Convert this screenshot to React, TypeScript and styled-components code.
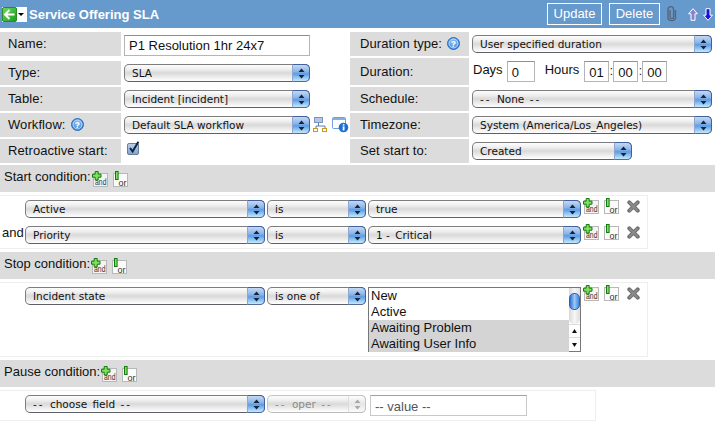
import React from "react";
import styled, { createGlobalStyle } from "styled-components";

const GlobalStyle = createGlobalStyle`
  html, body {
    margin: 0;
    padding: 0;
    background: #fff;
  }
  body {
    width: 715px;
    height: 422px;
    overflow: hidden;
    font-family: "Liberation Sans", Arial, sans-serif;
    font-size: 13px;
    color: #111;
  }
`;

const Header = styled.div`
  display: flex;
  align-items: center;
  height: 28px;
  background: #6699cc;
  padding-left: 2px;
`;

const BackButton = styled.div`
  display: flex;
  width: 25px;
  height: 15px;
  margin-top: 1px;
  background: #fff;
`;

const BackCaret = styled.div`
  width: 0;
  height: 0;
  margin: 6px 0 0 1px;
  border-left: 3px solid transparent;
  border-right: 3px solid transparent;
  border-top: 3px solid #000;
`;

const Title = styled.div`
  margin-left: 2px;
  color: #fff;
  font-weight: bold;
  font-size: 13px;
  flex: 1;
`;

const HeaderButton = styled.div<{ $width: number }>`
  box-sizing: border-box;
  width: ${(p) => p.$width}px;
  height: 22px;
  margin-right: 7px;
  border: 1px solid #fff;
  color: #fff;
  font-size: 13px;
  line-height: 20px;
  text-align: center;
`;

const HeaderIcons = styled.div`
  display: flex;
  align-items: center;
  width: 48px;
`;

const Spacer = styled.span<{ $width: number }>`
  flex: none;
  width: ${(p) => p.$width}px;
`;

const FormColumns = styled.div`
  display: flex;
  margin-top: 4px;
`;

const LeftColumn = styled.div`
  width: 350px;
`;

const RightColumn = styled.div`
  flex: 1;
`;

const Row = styled.div<{ $height?: number; $gap?: number }>`
  display: flex;
  height: ${(p) => p.$height ?? 24}px;
  margin-top: ${(p) => p.$gap ?? 2}px;
`;

const Label = styled.div<{ $width: number; $inset: number }>`
  display: flex;
  align-items: center;
  gap: 5px;
  box-sizing: border-box;
  width: ${(p) => p.$width}px;
  padding: 0 0 1px ${(p) => p.$inset}px;
  background: #dcdcdc;
  font-size: 13px;
  letter-spacing: 0.08px;
`;

const Control = styled.div`
  display: flex;
  align-items: center;
  flex: 1;
  padding-left: 3px;
`;

const TopControl = styled(Control)`
  align-items: flex-start;
`;

const NameInput = styled.div`
  box-sizing: border-box;
  width: 186px;
  height: 21px;
  margin-top: 3px;
  padding-left: 4px;
  border: 1px solid #b5b5b5;
  border-top-color: #8e8e8e;
  font-size: 13px;
  line-height: 20px;
`;

const SelectBox = styled.div<{ $width: number; $disabled?: boolean }>`
  display: flex;
  flex: none;
  box-sizing: border-box;
  width: ${(p) => p.$width}px;
  height: 18px;
  border: 1px solid ${(p) => (p.$disabled ? "#c4c4c4" : "#7d7d7d")};
  border-bottom-color: ${(p) => (p.$disabled ? "#bbb" : "#5f5f6a")};
  border-radius: 5px;
  background: linear-gradient(#fdfdfd 0%, #f0f0f0 25%, #d9d9d9 50%, #ececec 75%, #fff 100%);
  color: ${(p) => (p.$disabled ? "#8a8a8a" : "#111")};
`;

const SelectText = styled.div`
  flex: 1;
  padding-left: 7px;
  font-family: "DejaVu Sans", sans-serif;
  font-size: 10.5px;
  line-height: 16px;
  white-space: nowrap;
`;

const Dashes = styled.span`
  letter-spacing: 2px;
`;

const SpacedWords = styled.span`
  word-spacing: 2px;
`;

const SelectCap = styled.div<{ $disabled?: boolean }>`
  display: flex;
  align-items: center;
  justify-content: center;
  box-sizing: border-box;
  width: 18px;
  margin: -1px -1px -1px 0;
  border: 1px solid ${(p) => (p.$disabled ? "#c4c4c4" : "#41609f")};
  border-left-color: ${(p) => (p.$disabled ? "#ddd" : "#8fa6d0")};
  border-bottom-color: ${(p) => (p.$disabled ? "#bbb" : "#566a98")};
  border-radius: 0 5px 5px 0;
  background: ${(p) =>
    p.$disabled
      ? "linear-gradient(#fdfdfd, #e6e6e6 50%, #fafafa)"
      : "linear-gradient(#c4d8f2 0%, #8db6e8 40%, #5d9ce4 55%, #9fd0f6 85%, #c6e8fb 100%)"};
`;

const CheckBox = styled.div`
  align-self: flex-start;
  margin: 2px 0 0 6px;
`;

const DurationField = styled.div`
  display: flex;
  align-items: flex-start;
  flex: 1;
  padding: 3px 0 0 4px;
`;

const DurationWord = styled.span<{ $left?: number; $right: number }>`
  margin-left: ${(p) => p.$left ?? 0}px;
  margin-right: ${(p) => p.$right}px;
  font-size: 13px;
  line-height: 18px;
`;

const SmallInput = styled.div<{ $width: number }>`
  box-sizing: border-box;
  width: ${(p) => p.$width}px;
  height: 21px;
  padding-left: 4px;
  border: 1px solid #b5b5b5;
  border-top-color: #909090;
  font-size: 13px;
  line-height: 22px;
`;

const Colon = styled.span`
  width: 4px;
  text-align: center;
  font-size: 12px;
  line-height: 20px;
`;

const SectionBar = styled.div`
  display: flex;
  align-items: flex-start;
  height: 23px;
  margin-top: 3px;
  padding: 4px 0 0 4px;
  background: #dcdcdc;
  font-size: 13px;
  line-height: 15px;
`;

const FirstSectionBar = styled(SectionBar)`
  margin-top: 2px;
`;

const BarIcons = styled.div`
  display: flex;
  gap: 5px;
  margin-left: 1px;
  margin-top: 2px;
`;

const FilterBox = styled.div<{ $width: number; $height: number }>`
  box-sizing: border-box;
  width: ${(p) => p.$width}px;
  height: ${(p) => p.$height}px;
  margin-top: 3px;
  padding-top: 4px;
  border: 1px solid #eeeeee;
  border-left: none;
`;

const FilterRow = styled.div`
  display: flex;
  align-items: flex-start;
  gap: 2px;
  margin-bottom: 8px;
`;

const Conjunction = styled.span`
  flex: none;
  box-sizing: border-box;
  width: 23px;
  padding-left: 2px;
  font-size: 13px;
  line-height: 14px;
`;

const RowIcons = styled.div`
  display: flex;
  align-items: flex-start;
  margin-top: -2px;
`;

const OrGap = styled.div`
  width: 5px;
`;

const DeleteIcon = styled.div`
  margin: 2px 0 0 8px;
`;

const ListBox = styled.div`
  display: flex;
  flex: none;
  box-sizing: border-box;
  width: 213px;
  height: 65px;
  border: 1px solid #777;
`;

const ListItems = styled.div`
  flex: 1;
`;

const ListItem = styled.div<{ $selected?: boolean }>`
  height: 16px;
  padding-left: 2px;
  background: ${(p) => (p.$selected ? "#d4d4d4" : "#fff")};
  font-size: 13px;
  line-height: 16px;
`;

const ScrollBar = styled.div`
  display: flex;
  flex-direction: column;
  width: 11px;
  background: #fff;
`;

const ScrollTrack = styled.div`
  height: 37px;
  padding-top: 5px;
  box-sizing: border-box;
  border-radius: 0 0 5px 5px;
  background: linear-gradient(90deg, #d8d8d8, #f6f6f6 50%, #dedede);
`;

const ScrollThumb = styled.div`
  height: 17px;
  border: 1px solid #2d62b8;
  box-sizing: border-box;
  border-radius: 5px;
  background: linear-gradient(90deg, #2e6fd0, #9cc9f6 50%, #3d86e0);
`;

const ScrollArrow = styled.div`
  display: flex;
  align-items: center;
  justify-content: center;
  height: 13px;
  border-top: 1px solid #ddd;
`;

const ValueInput = styled.div`
  box-sizing: border-box;
  width: 157px;
  height: 21px;
  margin-left: 2px;
  padding-left: 4px;
  border: 1px solid #c9c9c9;
  border-top-color: #a0a0a0;
  color: #555;
  font-size: 13px;
  line-height: 21px;
`;

const Arrows = ({ dim }: { dim?: boolean }) => (
  <svg width="7" height="11" viewBox="0 0 7 11">
    <path d="M3.5 0.5 L6.5 4 H0.5 Z" fill={dim ? "#a8a8a8" : "#16233a"} />
    <path d="M3.5 10.5 L6.5 7 H0.5 Z" fill={dim ? "#a8a8a8" : "#16233a"} />
  </svg>
);

const Select = ({ width, children, disabled }: { width: number; children: React.ReactNode; disabled?: boolean }) => (
  <SelectBox $width={width} $disabled={disabled}>
    <SelectText>{children}</SelectText>
    <SelectCap $disabled={disabled}>
      <Arrows dim={disabled} />
    </SelectCap>
  </SelectBox>
);

const BackIcon = () => (
  <svg width="15" height="15" viewBox="0 0 15 15">
    <defs>
      <linearGradient id="backGreen" x1="0" y1="0" x2="1" y2="1">
        <stop offset="0" stopColor="#6fdc5c" />
        <stop offset="1" stopColor="#149a1e" />
      </linearGradient>
    </defs>
    <rect x="0.5" y="0.5" width="14" height="14" rx="1.5" fill="url(#backGreen)" stroke="#2a8a28" />
    <path d="M7.5 3 L3 7.5 L7.5 12 M3.5 7.5 H12.5" fill="none" stroke="#fff" strokeWidth="2" />
  </svg>
);

const HelpIcon = () => (
  <svg width="13" height="13" viewBox="0 0 13 13">
    <defs>
      <radialGradient id="helpBlue" cx="0.5" cy="0.4" r="0.7">
        <stop offset="0" stopColor="#9cc8f4" />
        <stop offset="1" stopColor="#1f6fd0" />
      </radialGradient>
    </defs>
    <circle cx="6.5" cy="6.5" r="6" fill="url(#helpBlue)" stroke="#2a6fc4" />
    <circle cx="6.5" cy="6.5" r="4.4" fill="none" stroke="#d5e8fb" strokeWidth="0.8" />
    <text x="6.5" y="9.6" textAnchor="middle" fontFamily="Liberation Sans" fontWeight="bold" fontSize="8.5" fill="#fff">?</text>
  </svg>
);

const TreeIcon = () => (
  <svg width="15" height="16" viewBox="0 0 15 16">
    <rect x="1.5" y="0.5" width="8" height="5" fill="#b6c6e4" stroke="#7a92c0" />
    <path d="M5.5 5.5 V9 M3 12 V9 H12 V12" fill="none" stroke="#5f7fa8" />
    <rect x="0.5" y="11.5" width="4" height="3" fill="#fff" stroke="#c79a1c" />
    <rect x="9.5" y="11.5" width="4" height="3" fill="#fff" stroke="#c79a1c" />
  </svg>
);

const InfoWindowIcon = () => (
  <svg width="17" height="16" viewBox="0 0 17 16">
    <rect x="0.5" y="0.5" width="13" height="11" rx="1" fill="#fff" stroke="#6f9fd8" />
    <rect x="1" y="1" width="12" height="2" fill="#7fb0e6" />
    <circle cx="11.5" cy="10.5" r="4.8" fill="#1f6fd0" />
    <rect x="10.7" y="9.4" width="1.8" height="4" fill="#fff" />
    <rect x="10.7" y="7.2" width="1.8" height="1.4" fill="#fff" />
  </svg>
);

const PaperClip = () => (
  <svg width="10" height="16" viewBox="0 0 10 16">
    <path
      d="M8.5 4 V11.5 C8.5 15.6 1 15.6 1 11.5 V3.5 C1 -0.4 6.6 -0.4 6.6 3.5 V11 C6.6 13.2 3 13.2 3 11 V4"
      fill="none"
      stroke="#56667c"
      strokeWidth="1.4"
    />
  </svg>
);

const ArrowUp = () => (
  <svg width="10" height="13" viewBox="0 0 10 13">
    <path d="M5 0.7 L9.4 5.8 H7 V12.3 H3 V5.8 H0.6 Z" fill="#8f7fd0" stroke="#fff" />
  </svg>
);

const ArrowDown = () => (
  <svg width="10" height="13" viewBox="0 0 10 13">
    <path d="M5 12.3 L9.4 7.2 H7 V0.7 H3 V7.2 H0.6 Z" fill="#1414e0" stroke="#fff" />
  </svg>
);

const CheckIcon = () => (
  <svg width="13" height="14" viewBox="0 0 13 14">
    <defs>
      <linearGradient id="checkBlue" x1="0" y1="0" x2="0" y2="1">
        <stop offset="0" stopColor="#bcd0ea" />
        <stop offset="1" stopColor="#7fa2d2" />
      </linearGradient>
    </defs>
    <rect x="0.5" y="2.5" width="11" height="11" rx="1.5" fill="url(#checkBlue)" stroke="#6a7d96" />
    <path d="M3 7 L5.6 10.4 L11.4 0.8" fill="none" stroke="#10253f" strokeWidth="2" />
  </svg>
);

const AndIcon = () => (
  <svg width="16" height="18" viewBox="0 0 16 18">
    <rect x="1.5" y="2.5" width="14" height="13" fill="#f4f4f4" stroke="#b8b8b8" />
    <g transform="scale(0.72 1)">
      <text x="12.2" y="14.5" textAnchor="middle" fontFamily="Liberation Sans" fontSize="9.5" fill="#333">and</text>
    </g>
    <path d="M3.2 0.5 H6.2 V3.2 H9 V6.2 H6.2 V9 H3.2 V6.2 H0.5 V3.2 H3.2 Z" fill="#7fe05a" stroke="#137a13" />
  </svg>
);

const OrIcon = () => (
  <svg width="15" height="18" viewBox="0 0 15 18">
    <rect x="0.5" y="2.5" width="14" height="13" fill="#fbfbfb" stroke="#b8b8b8" />
    <text x="9.5" y="14.5" textAnchor="middle" fontFamily="Liberation Sans" fontSize="9" fill="#333">or</text>
    <rect x="2.5" y="0.5" width="2.6" height="8" fill="#7fe05a" stroke="#137a13" />
  </svg>
);

const CrossIcon = () => (
  <svg width="13" height="13" viewBox="0 0 13 13">
    <path d="M2.3 2.3 L10.7 10.7 M10.7 2.3 L2.3 10.7" stroke="#6e6e6e" strokeWidth="4" strokeLinecap="round" />
    <path d="M2.8 2.8 L10.2 10.2 M10.2 2.8 L2.8 10.2" stroke="#8a8a8a" strokeWidth="2" strokeLinecap="round" />
  </svg>
);

const AddIcons = () => (
  <BarIcons>
    <AndIcon />
    <OrIcon />
  </BarIcons>
);

const ConditionIcons = () => (
  <RowIcons>
    <AndIcon />
    <OrGap />
    <OrIcon />
    <DeleteIcon>
      <CrossIcon />
    </DeleteIcon>
  </RowIcons>
);

const ScrollUp = () => (
  <svg width="5" height="4" viewBox="0 0 5 4">
    <path d="M2.5 0 L5 4 H0 Z" fill="#111" />
  </svg>
);

const ScrollDown = () => (
  <svg width="5" height="4" viewBox="0 0 5 4">
    <path d="M2.5 4 L5 0 H0 Z" fill="#111" />
  </svg>
);

export default function App() {
  return (
    <>
      <GlobalStyle />
      <Header>
        <BackButton>
          <BackIcon />
          <BackCaret />
        </BackButton>
        <Title>Service Offering SLA</Title>
        <HeaderButton $width={55}>Update</HeaderButton>
        <HeaderButton $width={51}>Delete</HeaderButton>
        <HeaderIcons>
          <PaperClip />
          <Spacer $width={11} />
          <ArrowUp />
          <Spacer $width={5} />
          <ArrowDown />
        </HeaderIcons>
      </Header>

      <FormColumns>
        <LeftColumn>
          <Row $gap={0}>
            <Label $width={121} $inset={8}>Name:</Label>
            <TopControl>
              <NameInput>P1 Resolution 1hr 24x7</NameInput>
            </TopControl>
          </Row>
          <Row $gap={5}>
            <Label $width={121} $inset={8}>Type:</Label>
            <Control><Select width={186}>SLA</Select></Control>
          </Row>
          <Row>
            <Label $width={121} $inset={8}>Table:</Label>
            <Control><Select width={186}>Incident [incident]</Select></Control>
          </Row>
          <Row>
            <Label $width={121} $inset={8}>Workflow: <HelpIcon /></Label>
            <Control>
              <Select width={186}>Default SLA workflow</Select>
              <Spacer $width={3} />
              <TreeIcon />
              <Spacer $width={4} />
              <InfoWindowIcon />
            </Control>
          </Row>
          <Row>
            <Label $width={121} $inset={8}>Retroactive start:</Label>
            <CheckBox>
              <CheckIcon />
            </CheckBox>
          </Row>
        </LeftColumn>

        <RightColumn>
          <Row $gap={0}>
            <Label $width={119} $inset={10}>Duration type: <HelpIcon /></Label>
            <Control><Select width={240}>User specified duration</Select></Control>
          </Row>
          <Row $height={27}>
            <Label $width={119} $inset={10}>Duration:</Label>
            <DurationField>
              <DurationWord $right={4}>Days</DurationWord>
              <SmallInput $width={28}>0</SmallInput>
              <DurationWord $left={10} $right={5}>Hours</DurationWord>
              <SmallInput $width={25}>01</SmallInput>
              <Colon>:</Colon>
              <SmallInput $width={25}>00</SmallInput>
              <Colon>:</Colon>
              <SmallInput $width={25}>00</SmallInput>
            </DurationField>
          </Row>
          <Row>
            <Label $width={119} $inset={10}>Schedule:</Label>
            <Control>
              <Select width={240}>
                <SpacedWords><Dashes>--</Dashes> None <Dashes>--</Dashes></SpacedWords>
              </Select>
            </Control>
          </Row>
          <Row>
            <Label $width={119} $inset={10}>Timezone:</Label>
            <Control><Select width={240}>System (America/Los_Angeles)</Select></Control>
          </Row>
          <Row>
            <Label $width={119} $inset={10}>Set start to:</Label>
            <Control><Select width={160}>Created</Select></Control>
          </Row>
        </RightColumn>
      </FormColumns>

      <FirstSectionBar>
        Start condition:
        <AddIcons />
      </FirstSectionBar>
      <FilterBox $width={648} $height={54}>
        <FilterRow>
          <Conjunction />
          <Select width={240}>Active</Select>
          <Select width={99}>is</Select>
          <Select width={213}>true</Select>
          <ConditionIcons />
        </FilterRow>
        <FilterRow>
          <Conjunction>and</Conjunction>
          <Select width={240}>Priority</Select>
          <Select width={99}>is</Select>
          <Select width={213}>1 <Dashes>-</Dashes> Critical</Select>
          <ConditionIcons />
        </FilterRow>
      </FilterBox>

      <SectionBar>
        Stop condition:
        <AddIcons />
      </SectionBar>
      <FilterBox $width={648} $height={75}>
        <FilterRow>
          <Conjunction />
          <Select width={240}>Incident state</Select>
          <Select width={99}>is one of</Select>
          <ListBox>
            <ListItems>
              <ListItem>New</ListItem>
              <ListItem>Active</ListItem>
              <ListItem $selected>Awaiting Problem</ListItem>
              <ListItem $selected>Awaiting User Info</ListItem>
            </ListItems>
            <ScrollBar>
              <ScrollTrack>
                <ScrollThumb />
              </ScrollTrack>
              <ScrollArrow><ScrollUp /></ScrollArrow>
              <ScrollArrow><ScrollDown /></ScrollArrow>
            </ScrollBar>
          </ListBox>
          <ConditionIcons />
        </FilterRow>
      </FilterBox>

      <SectionBar>
        Pause condition:
        <AddIcons />
      </SectionBar>
      <FilterBox $width={596} $height={31}>
        <FilterRow>
          <Conjunction />
          <Select width={240}>
            <SpacedWords><Dashes>--</Dashes> choose field <Dashes>--</Dashes></SpacedWords>
          </Select>
          <Select width={99} disabled>
            <SpacedWords><Dashes>--</Dashes> oper <Dashes>--</Dashes></SpacedWords>
          </Select>
          <ValueInput>-- value --</ValueInput>
        </FilterRow>
      </FilterBox>
    </>
  );
}
